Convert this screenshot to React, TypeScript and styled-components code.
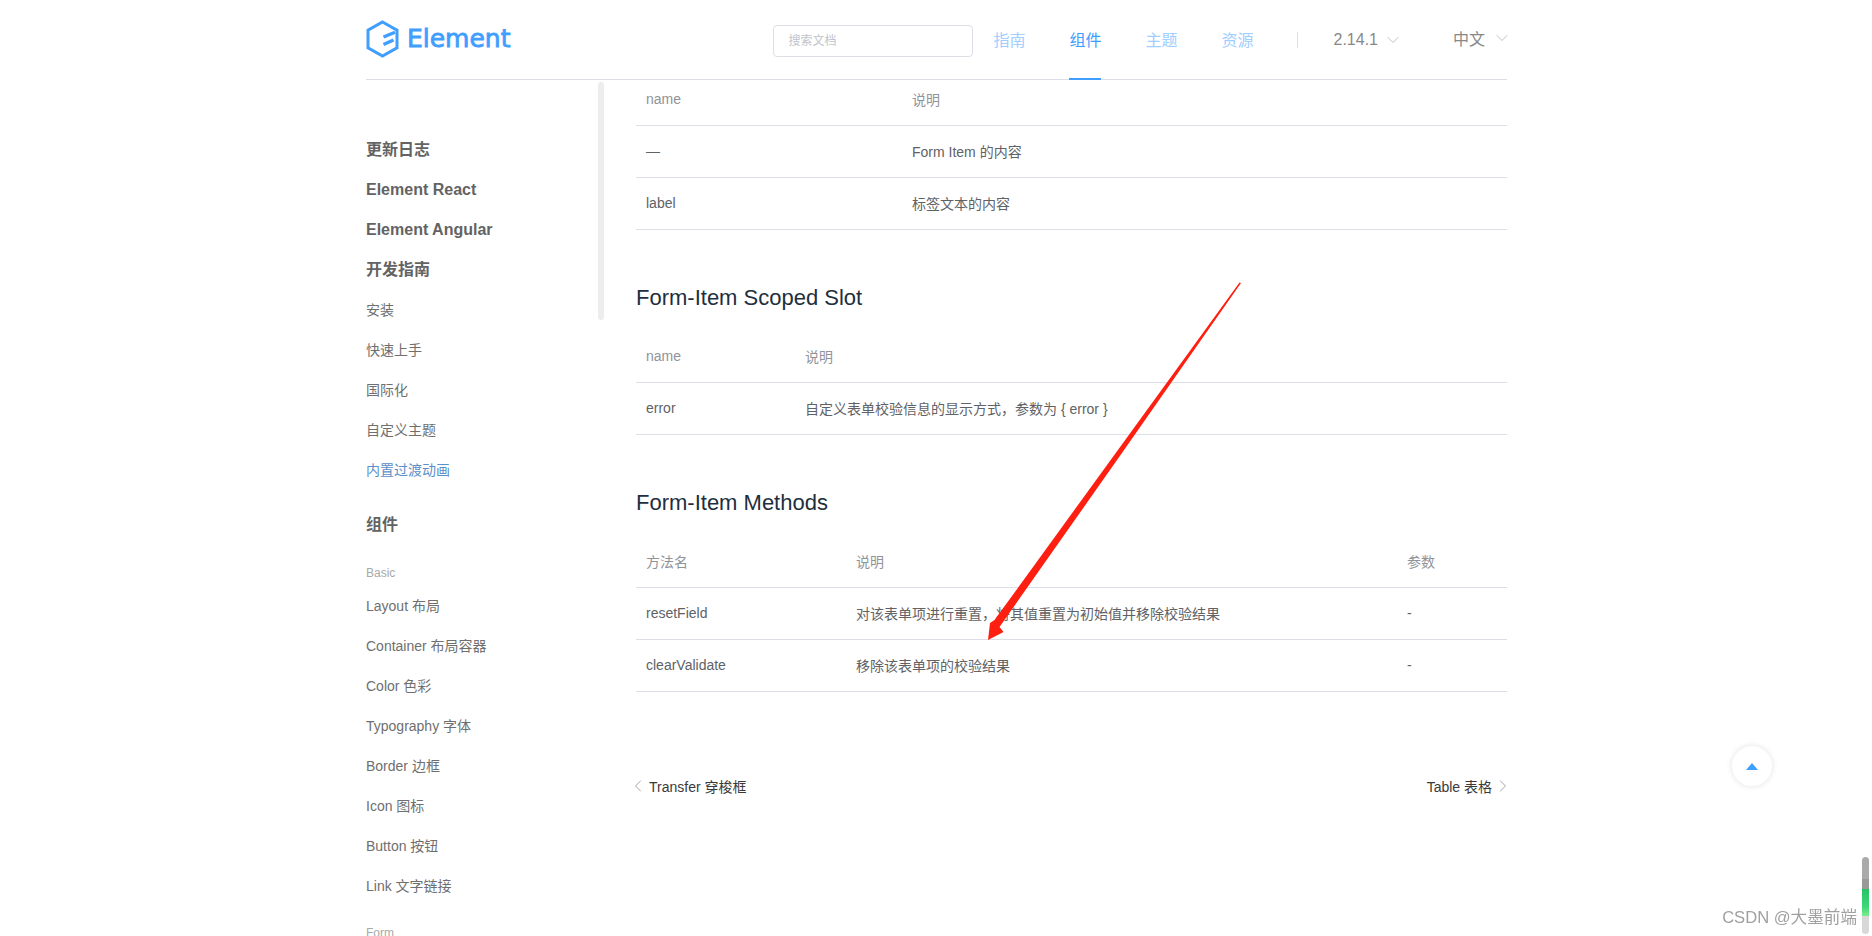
import * as React from "react";
import styled, { createGlobalStyle } from "styled-components";
import { ChevronDown, ChevronLeft, ChevronRight } from "lucide-react";

const FONT = `"Liberation Sans", "Noto Sans CJK SC", sans-serif`;

const GlobalStyle = createGlobalStyle`
  html, body {
    margin: 0;
    padding: 0;
    background: #fff;
    height: 936px;
    overflow: hidden;
    font-family: ${FONT};
  }
`;

const Page = styled.div`
  position: relative;
  width: 1872px;
  height: 936px;
  overflow: hidden;
  background: #fff;
`;

const Wrapper = styled.div`
  width: 1141px;
  margin-left: 366px;
`;

const Header = styled.header`
  display: flex;
  align-items: center;
  height: 79px;
  border-bottom: 1px solid #dcdfe6;
`;

const Logo = styled.div`
  display: flex;
  align-items: center;
  gap: 8px;
  margin-top: -2px;
`;

const LogoWord = styled.span`
  font-family: "DejaVu Sans", sans-serif;
  font-size: 25px;
  -webkit-text-stroke: 0.8px #409eff;
  color: #409eff;
`;

const HeaderRight = styled.div`
  display: flex;
  align-items: center;
  margin-left: auto;
  height: 100%;
`;

const Search = styled.div`
  box-sizing: border-box;
  width: 200px;
  height: 32px;
  margin-right: 20px;
  margin-top: 2px;
  border: 1px solid #dcdfe6;
  border-radius: 4px;
  padding: 0 14px;
  font-size: 12px;
  line-height: 30px;
  color: #c0c4cc;
`;

const NavLink = styled.a<{ $active?: boolean }>`
  position: relative;
  display: flex;
  align-items: center;
  height: 100%;
  margin-right: 44px;
  padding-bottom: 2px;
  box-sizing: border-box;
  font-size: 16px;
  color: ${(p) => (p.$active ? "#409eff" : "#9fceff")};
  &::after {
    content: "";
    display: ${(p) => (p.$active ? "block" : "none")};
    position: absolute;
    left: 0;
    right: 0;
    bottom: -1px;
    height: 2px;
    background: #409eff;
  }
`;

const NavDivider = styled.span`
  width: 1px;
  height: 16px;
  background: #dcdfe6;
  margin: 0 36px 0 -1px;
`;

const Version = styled.span<{ $lang?: boolean }>`
  display: flex;
  align-items: center;
  gap: ${(p) => (p.$lang ? "7px" : "5px")};
  font-size: 16px;
  color: #888;
  margin-left: ${(p) => (p.$lang ? "55px" : "0")};
  margin-right: -5px;
  padding-bottom: ${(p) => (p.$lang ? "3px" : "0")};
  svg {
    color: #b4b4b4;
  }
`;

const Body = styled.div`
  display: flex;
  height: 856px;
`;

const Sidebar = styled.aside`
  position: relative;
  box-sizing: border-box;
  width: 270px;
  flex-shrink: 0;
  padding-top: 50px;
  overflow: hidden;
`;

const SideScroll = styled.div`
  position: fixed;
  left: 598px;
  top: 82px;
  width: 6px;
  height: 238px;
  border-radius: 3px;
  background: #ededed;
`;

const GroupLink = styled.div`
  height: 40px;
  line-height: 40px;
  font-size: 16px;
  font-weight: 700;
  color: #636363;
  white-space: nowrap;
`;

const SubLink = styled.div`
  height: 40px;
  line-height: 40px;
  font-size: 14px;
  color: #6f6f6f;
  white-space: nowrap;
`;

const ActiveLink = styled(SubLink)`
  color: #5a8fc7;
`;

const ComponentsTitle = styled(GroupLink)`
  margin-top: 15px;
`;

const Caption = styled.div`
  margin-top: 15px;
  height: 26px;
  line-height: 26px;
  font-size: 12px;
  color: #a9a9a9;
`;

const FormCaption = styled(Caption)`
  margin-top: 14px;
`;

const Main = styled.main`
  width: 871px;
`;

const Table = styled.div`
  font-size: 14px;
`;

const Row = styled.div<{ $cols: string; $top?: boolean }>`
  display: grid;
  grid-template-columns: ${(p) => p.$cols};
  align-items: center;
  box-sizing: border-box;
  height: ${(p) => (p.$top ? 46 : 52)}px;
  padding-left: 10px;
  padding-bottom: ${(p) => (p.$top ? 7 : 2)}px;
  border-bottom: 1px solid #dcdfe6;
`;

const HeadCell = styled.div`
  color: #909399;
`;

const Cell = styled.div`
  color: #606266;
`;

const SectionTitle = styled.h3`
  margin: 54px 0 0;
  font-size: 22px;
  font-weight: 400;
  color: #1f2f3d;
  line-height: 28px;
`;

const TitledTable = styled(Table)`
  margin-top: 19px;
`;

const Pager = styled.div`
  display: flex;
  justify-content: space-between;
  margin-top: 84px;
  font-size: 14px;
  color: #3a3a3a;
`;

const PagerLink = styled.a`
  display: flex;
  align-items: center;
  gap: 1px;
  margin: 0 -6px 0 -8px;
  svg {
    color: #909399;
  }
`;

const BackTop = styled.div`
  position: absolute;
  left: 1732px;
  top: 746px;
  width: 40px;
  height: 40px;
  border-radius: 50%;
  background: #fff;
  box-shadow: 0 0 6px rgba(0, 0, 0, 0.12);
  display: flex;
  align-items: center;
  justify-content: center;
`;

const UpTriangle = styled.span`
  width: 0;
  height: 0;
  border-left: 6px solid transparent;
  border-right: 6px solid transparent;
  border-bottom: 7px solid #409eff;
`;

const Arrow = styled.svg`
  position: absolute;
  left: 0;
  top: 0;
  pointer-events: none;
`;

const Watermark = styled.div`
  position: absolute;
  right: 15px;
  top: 908px;
  font-size: 16.6px;
  line-height: 20px;
  color: #a0a0a0;
`;

const Meter = styled.div`
  position: absolute;
  left: 1862px;
  top: 857px;
  width: 7px;
  height: 77px;
  border-radius: 4px;
  overflow: hidden;
  background: linear-gradient(
    #aaa 0,
    #aaa 28%,
    #999 28%,
    #999 41%,
    #24c266 41%,
    #3ed877 65%,
    #7bea8f 76%,
    #d8d8d8 76%,
    #d8d8d8 100%
  );
`;

const sideTop = ["安装", "快速上手", "国际化", "自定义主题"];
const sideBasic = [
  "Layout 布局",
  "Container 布局容器",
  "Color 色彩",
  "Typography 字体",
  "Border 边框",
  "Icon 图标",
  "Button 按钮",
  "Link 文字链接"
];

const LogoMark = () => (
  <svg width="33" height="38" viewBox="0 0 33 38" fill="none">
    <path
      d="M16.5 2 L31 10.2 V27.8 L16.5 36 L2 27.8 V10.2 Z"
      stroke="#409eff"
      strokeWidth="3"
    />
    <path
      d="M17.5 17 L29 12.2 M17.5 24.5 L27.5 20"
      stroke="#409eff"
      strokeWidth="3.4"
    />
  </svg>
);

const topCols = "266px 1fr";
const slotCols = "159px 1fr";
const methodCols = "210px 551px 1fr";

const App = () => (
  <Page>
    <GlobalStyle />
    <Wrapper>
      <Header>
        <Logo>
          <LogoMark />
          <LogoWord>Element</LogoWord>
        </Logo>
        <HeaderRight>
          <Search>搜索文档</Search>
          <NavLink>指南</NavLink>
          <NavLink $active>组件</NavLink>
          <NavLink>主题</NavLink>
          <NavLink>资源</NavLink>
          <NavDivider />
          <Version>
            2.14.1 <ChevronDown size={20} strokeWidth={1} />
          </Version>
          <Version $lang>
            中文 <ChevronDown size={20} strokeWidth={1} />
          </Version>
        </HeaderRight>
      </Header>
      <Body>
        <Sidebar>
          <GroupLink>更新日志</GroupLink>
          <GroupLink>Element React</GroupLink>
          <GroupLink>Element Angular</GroupLink>
          <GroupLink>开发指南</GroupLink>
          {sideTop.map((t) => (
            <SubLink key={t}>{t}</SubLink>
          ))}
          <ActiveLink>内置过渡动画</ActiveLink>
          <ComponentsTitle>组件</ComponentsTitle>
          <Caption>Basic</Caption>
          {sideBasic.map((t) => (
            <SubLink key={t}>{t}</SubLink>
          ))}
          <FormCaption>Form</FormCaption>
        </Sidebar>
        <SideScroll />
        <Main>
          <Table>
            <Row $cols={topCols} $top>
              <HeadCell>name</HeadCell>
              <HeadCell>说明</HeadCell>
            </Row>
            <Row $cols={topCols}>
              <Cell>—</Cell>
              <Cell>Form Item 的内容</Cell>
            </Row>
            <Row $cols={topCols}>
              <Cell>label</Cell>
              <Cell>标签文本的内容</Cell>
            </Row>
          </Table>
          <SectionTitle>Form-Item Scoped Slot</SectionTitle>
          <TitledTable>
            <Row $cols={slotCols}>
              <HeadCell>name</HeadCell>
              <HeadCell>说明</HeadCell>
            </Row>
            <Row $cols={slotCols}>
              <Cell>error</Cell>
              <Cell>自定义表单校验信息的显示方式，参数为 {"{ error }"}</Cell>
            </Row>
          </TitledTable>
          <SectionTitle>Form-Item Methods</SectionTitle>
          <TitledTable>
            <Row $cols={methodCols}>
              <HeadCell>方法名</HeadCell>
              <HeadCell>说明</HeadCell>
              <HeadCell>参数</HeadCell>
            </Row>
            <Row $cols={methodCols}>
              <Cell>resetField</Cell>
              <Cell>对该表单项进行重置，将其值重置为初始值并移除校验结果</Cell>
              <Cell>-</Cell>
            </Row>
            <Row $cols={methodCols}>
              <Cell>clearValidate</Cell>
              <Cell>移除该表单项的校验结果</Cell>
              <Cell>-</Cell>
            </Row>
          </TitledTable>
          <Pager>
            <PagerLink>
              <ChevronLeft size={20} strokeWidth={1} />
              Transfer 穿梭框
            </PagerLink>
            <PagerLink>
              Table 表格
              <ChevronRight size={20} strokeWidth={1} />
            </PagerLink>
          </Pager>
        </Main>
      </Body>
    </Wrapper>
    <Arrow width="1872" height="936" viewBox="0 0 1872 936">
      <polygon
        points="1241,283 1123,451.5 999.5,627 1003.5,632 988,640 990,623 994.5,620 1119,448.5 1239.5,282.5"
        fill="#ff1f10"
      />
    </Arrow>
    <BackTop>
      <UpTriangle />
    </BackTop>
    <Watermark>CSDN @大墨前端</Watermark>
    <Meter />
  </Page>
);

export default App;
